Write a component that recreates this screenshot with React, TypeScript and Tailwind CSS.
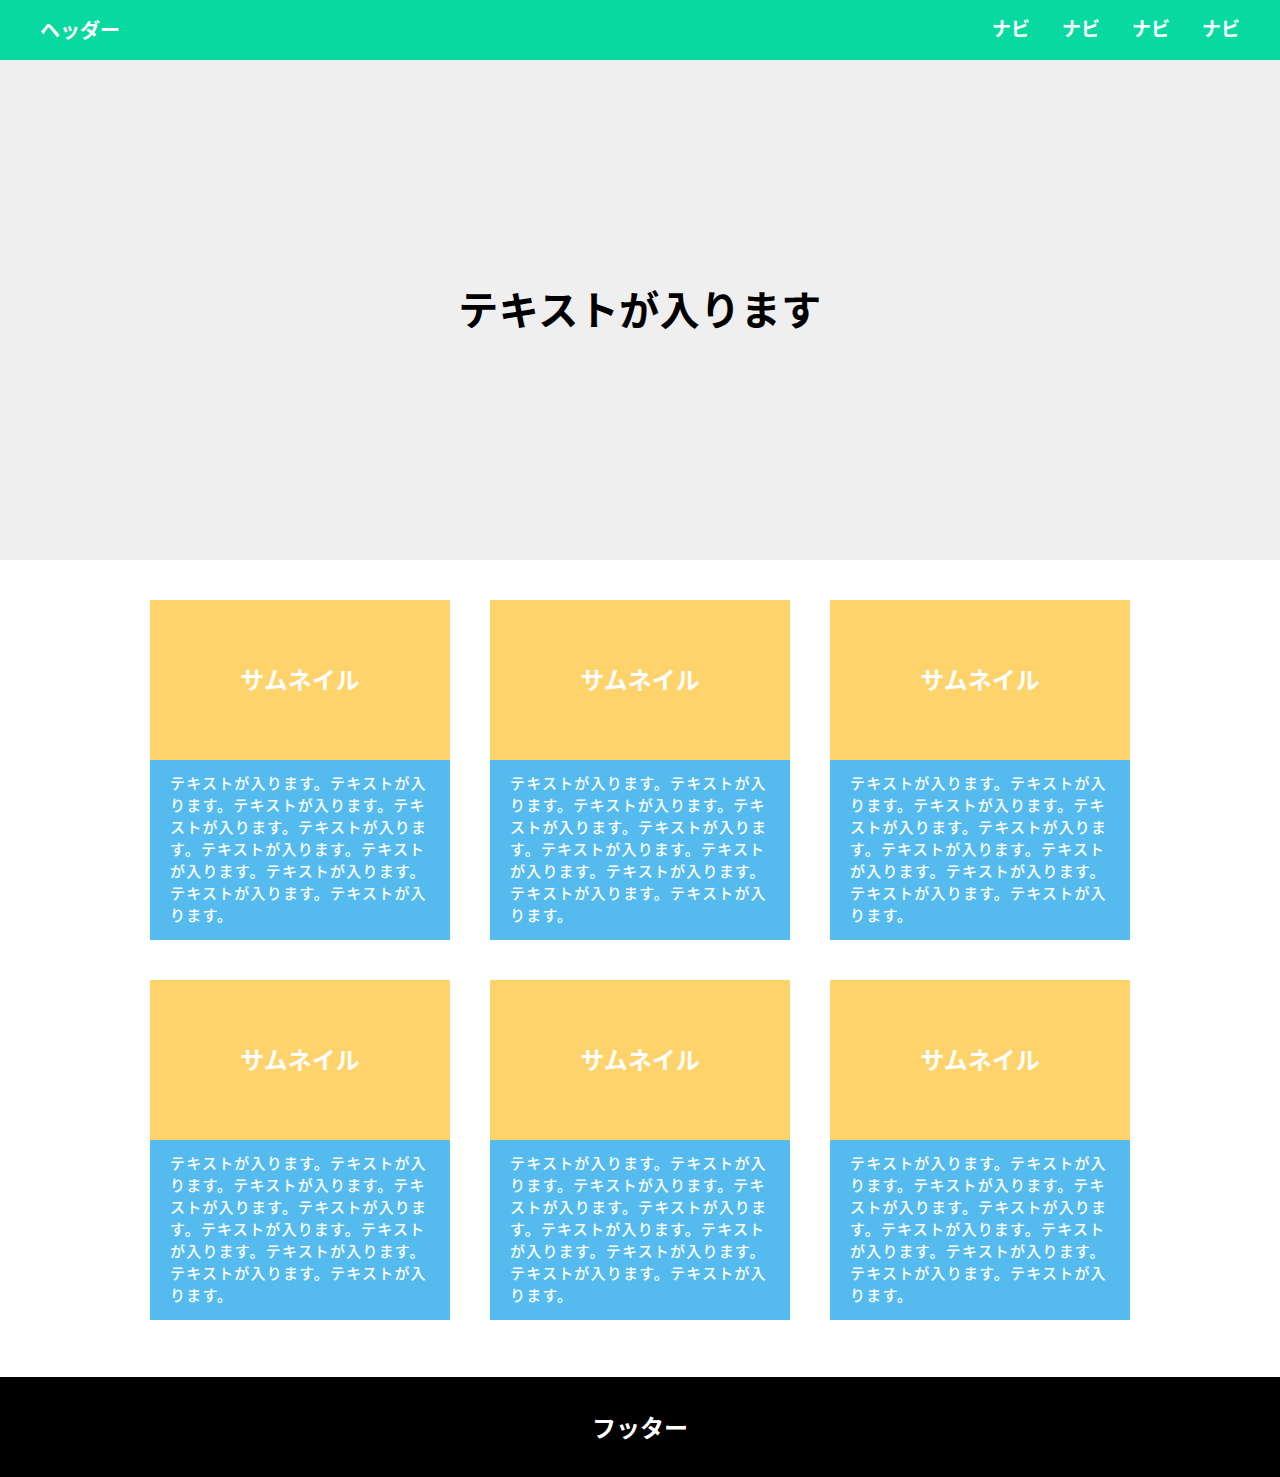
import React from 'react';

const body = 'テキストが入ります。'.repeat(10);

export default function App() {
  return (
    <div className="min-h-[1477px] bg-white font-['Noto_Sans_CJK_JP',sans-serif]">
      {/* Header */}
      <header className="h-[60px] bg-[#08d9a0] px-10 flex items-center justify-between text-white font-bold">
        <div className="text-xl">ヘッダー</div>
        <nav className="flex gap-[32px] text-[19px] -mt-1">
          {[0, 1, 2, 3].map((i) => (
            <a key={i}>ナビ</a>
          ))}
        </nav>
      </header>

      {/* Hero */}
      <section className="h-[500px] bg-[#efefef] flex items-center justify-center">
        <h1 className="text-[40px] font-bold text-black tracking-[0.5px] -mt-1">テキストが入ります</h1>
      </section>

      {/* Cards */}
      <section className="pt-10 pb-[57px]">
        <div className="w-[980px] mx-auto grid grid-cols-3 gap-10">
          {[0, 1, 2, 3, 4, 5].map((i) => (
            <div key={i}>
              <div className="h-[160px] bg-[#ffd36b] flex items-center justify-center text-white text-2xl font-bold">
                <span className="-mt-0.5">サムネイル</span>
              </div>
              <div className="h-[180px] bg-[#55bbee] px-5 pt-[12px] text-white text-[15px] leading-[22px] tracking-[1.2px] font-medium">
                {body}
              </div>
            </div>
          ))}
        </div>
      </section>

      {/* Footer */}
      <footer className="h-[100px] bg-black flex items-center justify-center text-white text-2xl font-bold">
        フッター
      </footer>
    </div>
  );
}
